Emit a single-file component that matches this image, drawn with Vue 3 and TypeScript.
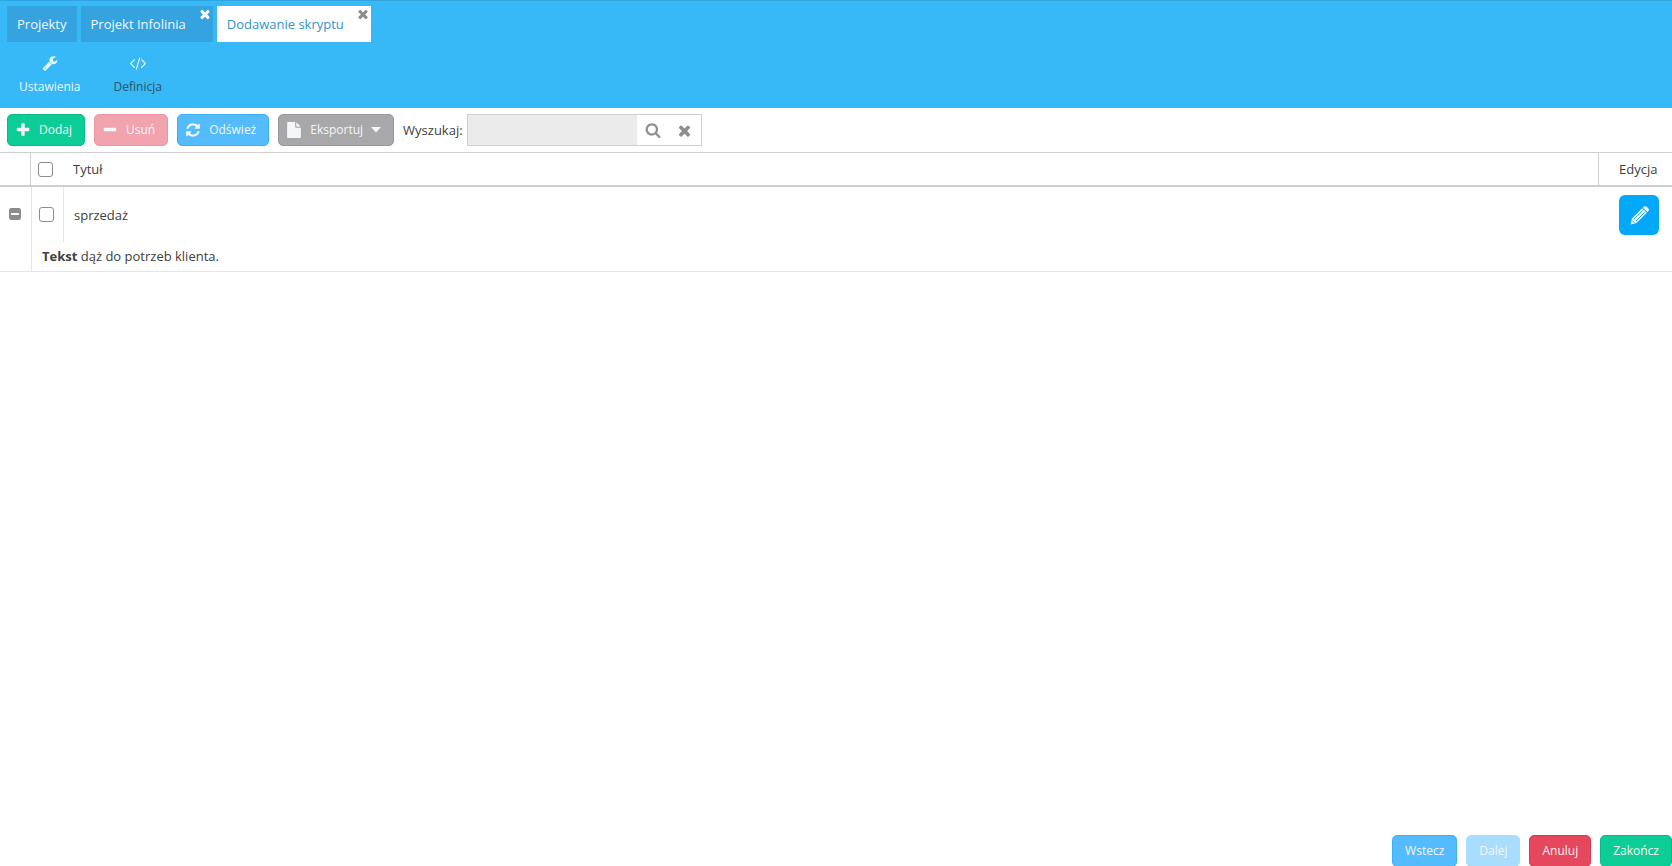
<script setup lang="ts">
import { ref } from 'vue'

interface Tab {
  label: string
  closable: boolean
}

interface ToolButton {
  label: string
  icon: string
  tone: string
  menu?: boolean
}

const tabs: Tab[] = [
  { label: 'Projekty', closable: false },
  { label: 'Projekt Infolinia', closable: true },
  { label: 'Dodawanie skryptu', closable: true },
]
const activeTab = ref(2)

const icons: Record<string, string> = {
  plus: 'M1600 736v192q0 40-28 68t-68 28h-416v416q0 40-28 68t-68 28h-192q-40 0-68-28t-28-68v-416h-416q-40 0-68-28t-28-68v-192q0-40 28-68t68-28h416v-416q0-40 28-68t68-28h192q40 0 68 28t28 68v416h416q40 0 68 28t28 68z',
  minus: 'M1600 736v192q0 40-28 68t-68 28h-1216q-40 0-68-28t-28-68v-192q0-40 28-68t68-28h1216q40 0 68 28t28 68z',
  times: 'M1490 1322q0 40-28 68l-136 136q-28 28-68 28t-68-28l-294-294-294 294q-28 28-68 28t-68-28l-136-136q-28-28-28-68t28-68l294-294-294-294q-28-28-28-68t28-68l136-136q28-28 68-28t68 28l294 294 294-294q28-28 68-28t68 28l136 136q28 28 28 68t-28 68l-294 294 294 294q28 28 28 68z',
  refresh: 'M1639 1056q0 5-1 7-64 268-268 434.5t-478 166.5q-146 0-282.5-55t-243.5-157l-129 129q-19 19-45 19t-45-19-19-45v-448q0-26 19-45t45-19h448q26 0 45 19t19 45-19 45l-137 137q71 66 161 102t187 36q134 0 250-65t186-179q11-17 53-117 8-23 30-23h192q13 0 22.5 9.5t9.500 22.5zm25-800v448q0 26-19 45t-45 19h-448q-26 0-45-19t-19-45 19-45l138-138q-148-137-349-137-134 0-250 65t-186 179q-11 17-53 117-8 23-30 23h-199q-13 0-22.5-9.5t-9.5-22.5v-7q65-268 270-434.5t480-166.5q146 0 284 55.5t245 156.5l130-129q19-19 45-19t45 19 19 45z',
  file: 'M1152 512v-472q22 14 36 28l408 408q14 14 28 36h-472zm-128 32q0 40 28 68t68 28h544v1056q0 40-28 68t-68 28h-1344q-40 0-68-28t-28-68v-1600q0-40 28-68t68-28h800v544z',
  search: 'M1216 832q0-185-131.5-316.5t-316.5-131.5-316.5 131.5-131.5 316.5 131.5 316.5 316.5 131.5 316.5-131.5 131.5-316.5zm512 832q0 52-38 90t-90 38q-54 0-90-38l-343-342q-179 124-399 124-143 0-273.5-55.5t-225-150-150-225-55.5-273.5 55.5-273.5 150-225 225-150 273.5-55.5 273.5 55.5 225 150 150 225 55.5 273.5q0 220-124 399l343 343q37 37 37 90z',
  wrench: 'M448 1472q0-26-19-45t-45-19-45 19-19 45 19 45 45 19 45-19 19-45zm644-420l-682 682q-37 37-90 37-52 0-91-37l-106-108q-38-36-38-90 0-53 38-91l681-681q39 98 114.5 173.5t173.5 114.5zm634-435q0 39-23 106-47 134-164.5 217.5t-258.5 83.5q-185 0-316.5-131.5t-131.5-316.5 131.5-316.5 316.5-131.5q58 0 121.5 16.5t107.5 46.5q16 11 16 28t-16 28l-293 169v224l193 107q5-3 79-48.5t135.5-81 70.5-35.5q15 0 23.5 10t8.5 25z',
  code: 'M553 1399l-50 50q-10 10-23 10t-23-10l-466-466q-10-10-10-23t10-23l466-466q10-10 23-10t23 10l50 50q10 10 10 23t-10 23l-393 393 393 393q10 10 10 23t-10 23zm591-1067l-373 1291q-4 13-15.5 19.5t-23.5 2.5l-62-17q-13-4-19.5-15.5t-2.5-24.5l373-1291q4-13 15.5-19.5t23.5-2.5l62 17q13 4 19.5 15.5t2.5 24.5zm657 651l-466 466q-10 10-23 10t-23-10l-50-50q-10-10-10-23t10-23l393-393-393-393q-10-10-10-23t10-23l50-50q10-10 23-10t23 10l466 466q10 10 10 23t-10 23z',
  minusSquare: 'M1408 960v-128q0-26-19-45t-45-19h-896q-26 0-45 19t-19 45v128q0 26 19 45t45 19h896q26 0 45-19t19-45zm256-544v960q0 119-84.5 203.5t-203.5 84.5h-960q-119 0-203.5-84.5t-84.5-203.5v-960q0-119 84.5-203.5t203.5-84.5h960q119 0 203.5 84.5t84.5 203.5z',
}

const sections = [
  { label: 'Ustawienia', icon: 'wrench', current: false },
  { label: 'Definicja', icon: 'code', current: true },
]

const tools: ToolButton[] = [
  { label: 'Dodaj', icon: 'plus', tone: 'green' },
  { label: 'Usuń', icon: 'minus', tone: 'pink' },
  { label: 'Odśwież', icon: 'refresh', tone: 'blue' },
  { label: 'Eksportuj', icon: 'file', tone: 'gray', menu: true },
]

const wizard = [
  { label: 'Wstecz', tone: 'blue' },
  { label: 'Dalej', tone: 'pale' },
  { label: 'Anuluj', tone: 'red' },
  { label: 'Zakończ', tone: 'green' },
]

const query = ref('')
const expanded = ref(true)
const checked = ref(false)
</script>

<template>
  <div class="page">
    <header class="top">
      <nav class="tabs">
        <div v-for="(tab, i) in tabs" :key="tab.label" class="tab" :class="{ active: i === activeTab, closable: tab.closable }">
          <button type="button" class="tab-label" @click="activeTab = i">{{ tab.label }}</button>
          <button v-if="tab.closable" type="button" class="tab-close" aria-label="Zamknij">
            <svg viewBox="0 0 1792 1792" width="14" height="14"><path :d="icons.times" /></svg>
          </button>
        </div>
      </nav>
      <nav class="sections">
        <button v-for="s in sections" :key="s.label" type="button" class="section" :class="{ current: s.current }">
          <svg viewBox="0 0 1792 1792" width="16" height="16"><path :d="icons[s.icon]" /></svg>
          <span>{{ s.label }}</span>
        </button>
      </nav>
    </header>

    <div class="toolbar">
      <button v-for="t in tools" :key="t.label" type="button" class="btn tool" :class="t.tone">
        <svg viewBox="0 0 1792 1792" width="16" height="16"><path :d="icons[t.icon]" /></svg>
        <span>{{ t.label }}</span>
        <svg v-if="t.menu" class="caret" viewBox="0 0 10 6" width="10" height="6"><path d="M0 0h10L5 5.500z" /></svg>
      </button>
      <div class="search-field">
        <label for="search">Wyszukaj:</label>
        <div class="search">
          <input id="search" v-model="query" type="text" />
          <button type="button" aria-label="Szukaj">
            <svg viewBox="0 0 1792 1792" width="16" height="16"><path :d="icons.search" /></svg>
          </button>
          <button type="button" aria-label="Wyczyść" @click="query = ''">
            <svg viewBox="0 0 1792 1792" width="17" height="17"><path :d="icons.times" /></svg>
          </button>
        </div>
      </div>
    </div>

    <main>
      <table class="grid">
        <colgroup>
          <col class="c-toggle" />
          <col class="c-check" />
          <col />
          <col class="c-edit" />
        </colgroup>
        <thead>
          <tr>
            <th class="toggle"></th>
            <th class="check"><input type="checkbox" aria-label="Zaznacz wszystko" /></th>
            <th class="title">Tytuł</th>
            <th class="edit">Edycja</th>
          </tr>
        </thead>
        <tbody>
          <tr class="item">
            <td class="toggle">
              <button type="button" aria-label="Zwiń" @click="expanded = !expanded">
                <svg viewBox="0 0 1792 1792" width="14" height="14"><path :d="icons.minusSquare" /></svg>
              </button>
            </td>
            <td class="check"><input v-model="checked" type="checkbox" aria-label="Zaznacz sprzedaż" /></td>
            <td class="title">sprzedaż</td>
            <td class="edit">
              <button type="button" class="edit-btn" aria-label="Edytuj">
                <svg viewBox="0 0 20 20" width="20" height="20">
                  <path class="lead" d="M1.500 19.500L3 13.500 13.200 3.300l4.500 4.500L7.500 18z" />
                  <path class="groove" d="M5 14.200L13.700 5.500M6.900 16.100L15.600 7.400M3 15.400l2.600 2.600" />
                  <path class="lead" d="M13.900 2.600l1-1q1.400-1 2.800.2l1.500 1.500q1.200 1.400.2 2.800l-1 1z" />
                </svg>
              </button>
            </td>
          </tr>
          <tr v-if="expanded" class="detail">
            <td></td>
            <td colspan="3"><b>Tekst</b> dąż do potrzeb klienta.</td>
          </tr>
        </tbody>
      </table>
    </main>

    <footer class="wizard">
      <button v-for="w in wizard" :key="w.label" type="button" class="btn" :class="w.tone">{{ w.label }}</button>
    </footer>
  </div>
</template>

<style>
body {
  margin: 0;
  background: #fff;
}
</style>

<style scoped>
.page {
  display: flex;
  flex-direction: column;
  height: 100vh;
  overflow: hidden;
  font: 13px/18px "Open Sans", sans-serif;
  color: #404040;
}
button {
  margin: 0;
  padding: 0;
  border: 0;
  background: none;
  font: inherit;
  color: inherit;
  cursor: pointer;
}
svg {
  display: block;
  flex: none;
  fill: currentColor;
}
.top {
  height: 108px;
  box-sizing: border-box;
  border-top: 1px solid #30a5de;
  background: #36b9f6;
  padding: 5px 7px 0;
}
.tabs {
  display: flex;
  gap: 4px;
}
.tab {
  position: relative;
  height: 36px;
  background: #35a3df;
  color: #f2f9fd;
}
.tab-label {
  height: 100%;
  padding: 0 10px;
}
.closable .tab-label {
  padding-right: 27px;
}
.tab.active {
  background: #fff;
  color: #3593c8;
}
.tab-close {
  position: absolute;
  top: 1px;
  right: 1px;
  color: #fff;
}
.active .tab-close {
  color: #8c8c8c;
}
.sections {
  display: flex;
  gap: 33px;
  padding: 13px 12px 0;
}
.section {
  display: flex;
  flex-direction: column;
  align-items: center;
  gap: 7px;
  font-size: 12px;
  color: #e6f6fe;
}
.section.current span {
  color: #2c536b;
}
.toolbar {
  display: flex;
  align-items: center;
  gap: 9px;
  padding: 6px 7px;
}
.btn {
  display: flex;
  align-items: center;
  height: 32px;
  box-sizing: border-box;
  padding: 0 12px;
  border: 1px solid;
  border-radius: 5px;
  font-size: 12px;
  color: #f4f6f7;
}
.tool {
  gap: 8px;
  padding: 0 12px 0 7px;
}
.green {
  background: #0dcd97;
  border-color: #0bb887;
}
.pink {
  background: #f1a4ae;
  border-color: #f0959f;
}
.blue {
  background: #54bbfd;
  border-color: #3cb0fb;
}
.gray {
  background: #a8a8aa;
  border-color: #99999b;
}
.pale {
  background: #a9ddfd;
  border-color: #a9ddfd;
}
.red {
  background: #e5485c;
  border-color: #de3549;
}
.search-field {
  display: flex;
  align-items: center;
  gap: 4px;
}
.search {
  display: flex;
  height: 32px;
  box-sizing: border-box;
  border: 1px solid #cfcfcf;
}
.search input {
  width: 169px;
  box-sizing: border-box;
  border: 0;
  padding: 0 8px;
  background: #ebebeb;
  font: inherit;
  outline: none;
}
.search button {
  display: grid;
  place-items: center;
  width: 32px;
  color: #8f8f8f;
}
main {
  flex: 1;
}
.grid {
  width: 100%;
  table-layout: fixed;
  border-collapse: separate;
  border-spacing: 0;
}
.c-toggle {
  width: 31px;
}
.c-check {
  width: 33px;
}
.c-edit {
  width: 74px;
}
th,
td {
  padding: 0;
  text-align: left;
  font-weight: 400;
}
th {
  height: 32px;
  border-top: 1px solid #cfcfcf;
  border-bottom: 2px solid #cfcfcf;
}
th.toggle {
  border-right: 1px solid #cfcfcf;
}
th.check {
  padding-left: 7px;
}
th.title {
  padding-left: 9px;
}
th.edit {
  padding-left: 20px;
  border-left: 1px solid #cfcfcf;
}
.item td {
  height: 55px;
}
td.toggle {
  padding-left: 8px;
}
td.check {
  padding-left: 7px;
  border-left: 1px solid #e6e6e6;
  border-right: 1px solid #e6e6e6;
}
td.title {
  padding-left: 10px;
}
td.edit {
  padding-left: 21px;
}
input[type="checkbox"] {
  appearance: none;
  display: block;
  width: 15px;
  height: 15px;
  margin: 0;
  border: 1px solid #8c8c8c;
  border-radius: 3px;
  background: #fff;
}
.item td.toggle {
  height: 53px;
  padding-bottom: 2px;
}
td.toggle button {
  display: block;
  color: #8c8c8c;
}
.edit-btn {
  display: grid;
  place-items: center;
  width: 40px;
  height: 40px;
  border-radius: 6px;
  background: #03a9f8;
}
.lead {
  fill: #fff;
}
.groove {
  fill: none;
  stroke: #03a9f8;
  stroke-width: 1;
}
.detail td {
  height: 27px;
  padding-bottom: 2px;
  border-bottom: 1px solid #e6e6e6;
}
.detail td + td {
  padding-left: 10px;
  border-left: 1px solid #e6e6e6;
}
.wizard {
  display: flex;
  align-items: flex-start;
  justify-content: flex-end;
  gap: 9px;
  height: 31px;
}
</style>
